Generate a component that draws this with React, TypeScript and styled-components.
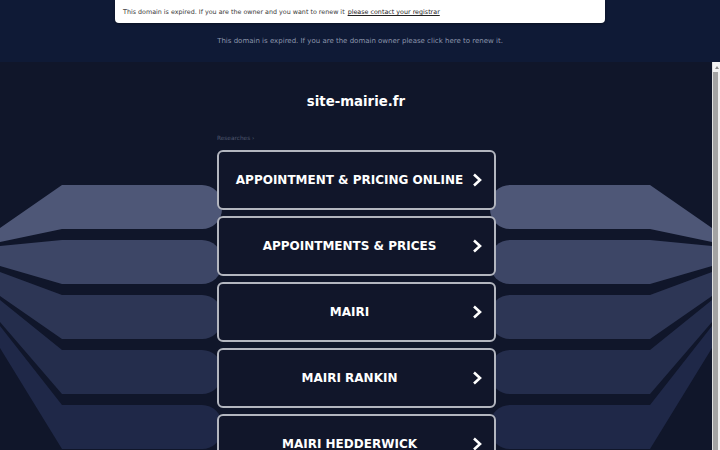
import styled, { createGlobalStyle } from 'styled-components';

const GlobalStyle = createGlobalStyle`
  html, body {
    margin: 0;
    padding: 0;
    height: 100%;
    overflow: hidden;
    background: #10162a;
  }
  body {
    font-family: "DejaVu Sans", "Liberation Sans", sans-serif;
  }
`;

const Header = styled.header`
  height: 62px;
  background: #0f1a36;
  display: flex;
  flex-direction: column;
  align-items: center;
`;

const Notice = styled.div`
  width: 490px;
  height: 23px;
  box-sizing: border-box;
  padding: 0 8px;
  display: flex;
  align-items: center;
  background: #fff;
  border-radius: 0 0 4px 4px;
  box-shadow: 0 1px 3px rgba(0, 0, 0, 0.35);
  color: #3a3a3a;
  font-size: 6.36px;
  white-space: nowrap;

  a {
    color: #222;
    text-decoration: underline;
    margin-left: 3px;
  }
`;

const Renew = styled.p`
  margin: 13px 0 0;
  line-height: 10px;
  font-size: 7px;
  color: #8d96ac;
`;

/* embedded page plus its scrollbar */
const Viewport = styled.div`
  display: flex;
  height: 600px;
`;

const Frame = styled.main`
  flex: 1;
  overflow: hidden;
  background: #10162a;
`;

const ScrollTrack = styled.div`
  width: 8px;
  box-sizing: border-box;
  display: flex;
  flex-direction: column;
  background: #f3f3f3;
  border-left: 1px solid #e0e0e0;
`;

const ScrollArrow = styled.div`
  height: 10px;
  display: flex;
  align-items: center;
  justify-content: center;

  &::before {
    content: '';
    border-left: 2px solid transparent;
    border-right: 2px solid transparent;
    border-bottom: 3px solid #8a8a8a;
  }
`;

const ScrollThumb = styled.div`
  flex: 1;
  margin: 0 2px 0 0;
  background: #a3a3a3;
`;

const Page = styled.div`
  padding-top: 30px;
`;

const Title = styled.h1`
  margin: 0;
  text-align: center;
  font-size: 13.3px;
  line-height: 20px;
  font-weight: bold;
  color: #fff;
`;

const Layout = styled.div`
  display: grid;
  grid-template-columns: 217px 279px 1fr;
  margin-top: 21px;
`;

const Caption = styled.div`
  grid-column: 2;
  font-size: 5.8px;
  line-height: 10px;
  color: #4e566d;
  margin-bottom: 7px;
`;

const WingBox = styled.div<{ $flip?: boolean }>`
  grid-row: 2;
  grid-column: ${(p) => (p.$flip ? 3 : 1)};
  transform: ${(p) => (p.$flip ? 'scaleX(-1)' : 'none')};
  transform-origin: 108px 0;

  svg {
    display: block;
    overflow: visible;
  }
`;

const List = styled.div`
  grid-row: 2;
  grid-column: 2;
  z-index: 1;
  display: flex;
  flex-direction: column;
  gap: 6px;
`;

const Item = styled.a`
  display: flex;
  align-items: center;
  height: 60px;
  box-sizing: border-box;
  padding: 0 12px 0 14px;
  border: 2px solid #b3b6bf;
  border-radius: 6px;
  background: #11162a;
  color: #fff;
  text-decoration: none;
`;

const ItemLabel = styled.span`
  flex: 1;
  text-align: center;
  font-size: 12px;
  font-weight: bold;
  white-space: nowrap;
`;

const Chevron = styled.svg`
  flex: none;
  margin-left: 6px;
`;

const bands = [
  { color: '#4e5777', tip: [78, 92] },
  { color: '#3d4666', tip: [96, 116] },
  { color: '#2d3655', tip: [122, 146] },
  { color: '#242d4c', tip: [150, 172] },
  { color: '#1f2848', tip: [176, 198] },
];

const bandPath = (i: number, tip: number[]) => {
  const top = 35 + 55 * i;
  const bot = top + 44;
  return `M0,${tip[0]} L62,${top} L202,${top} A20,20 0 0 1 222,${top + 20} L222,${bot - 20} A20,20 0 0 1 202,${bot} L62,${bot} L0,${tip[1]} Z`;
};

const Wing = ({ flip }: { flip?: boolean }) => (
  <WingBox $flip={flip}>
    <svg width="217" height="320" viewBox="0 0 217 320">
      {bands.map((b, i) => (
        <path key={i} d={bandPath(i, b.tip)} fill={b.color} />
      ))}
    </svg>
  </WingBox>
);

const links = [
  'APPOINTMENT & PRICING ONLINE',
  'APPOINTMENTS & PRICES',
  'MAIRI',
  'MAIRI RANKIN',
  'MAIRI HEDDERWICK',
];

const App = () => (
  <>
    <GlobalStyle />
    <Header>
      <Notice>
        This domain is expired. If you are the owner and you want to renew it
        <a href="#">please contact your registrar</a>
      </Notice>
      <Renew>This domain is expired. If you are the domain owner please click here to renew it.</Renew>
    </Header>
    <Viewport>
      <Frame>
        <Page>
          <Title>site-mairie.fr</Title>
          <Layout>
            <Caption>Researches ›</Caption>
            <Wing />
            <List>
              {links.map((text) => (
                <Item key={text} href="#">
                  <ItemLabel>{text}</ItemLabel>
                  <Chevron width="10" height="14" viewBox="0 0 10 14">
                    <polyline points="2,1.5 8,7 2,12.5" fill="none" stroke="#fff" strokeWidth="2.6" />
                  </Chevron>
                </Item>
              ))}
            </List>
            <Wing flip />
          </Layout>
        </Page>
      </Frame>
      <ScrollTrack>
        <ScrollArrow />
        <ScrollThumb />
      </ScrollTrack>
    </Viewport>
  </>
);

export default App;
